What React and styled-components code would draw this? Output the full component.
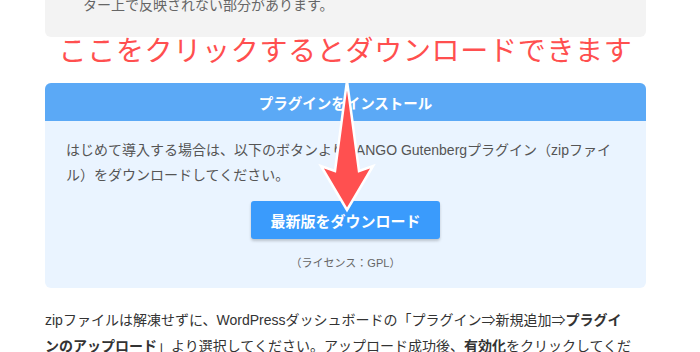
import React from 'react';
import styled, { createGlobalStyle } from 'styled-components';

const GlobalStyle = createGlobalStyle`
  body {
    margin: 0;
    background: #fff;
    font-family: "Liberation Sans", "Noto Sans CJK JP", sans-serif;
  }
`;

const Page = styled.div`
  position: relative;
  width: 700px;
  height: 352px;
  overflow: hidden;
  padding: 0 54px 0 45px;
  box-sizing: border-box;
`;

const Note = styled.div`
  margin-top: -20px;
  padding: 12px 38px 19px;
  background: #f3f3f3;
  border-radius: 6px;
  font-size: 14px;
  line-height: 26px;
  color: #666;
`;

const Annotation = styled.div`
  height: 46px;
  line-height: 24px;
  text-align: center;
  font-family: "Noto Sans CJK JP", sans-serif;
  font-weight: 400;
  font-size: 28px;
  letter-spacing: 0.7px;
  color: #ff4f4f;
  text-shadow: 0 0 2px #fff, 0 0 2px #fff;
`;

const InstallBox = styled.section`
  background: #eaf4ff;
  border-radius: 6px;
  overflow: hidden;
`;

const BoxHeader = styled.div`
  height: 38px;
  display: flex;
  align-items: center;
  justify-content: center;
  background: #5ba9f6;
  color: #fff;
  font-weight: bold;
  font-size: 14.5px;
`;

const BoxBody = styled.div`
  display: flex;
  flex-direction: column;
  align-items: center;
  padding: 17px 21px 17px;
`;

const BoxText = styled.p`
  margin: 0;
  align-self: stretch;
  font-size: 14px;
  line-height: 25px;
  color: #555;
`;

const DownloadButton = styled.a`
  margin-top: 13px;
  width: 189px;
  height: 38px;
  display: flex;
  align-items: center;
  justify-content: center;
  background: #3a9bfc;
  border-radius: 3px;
  box-shadow: 0 2px 3px rgba(0, 0, 0, 0.2);
  color: #fff;
  font-weight: bold;
  font-size: 15px;
  text-decoration: none;
`;

const License = styled.div`
  margin-top: 16px;
  font-size: 11px;
  line-height: 16px;
  color: #666;
`;

const Paragraph = styled.p`
  margin: 19px 0 0;
  width: 588px;
  font-size: 14px;
  line-height: 26px;
  color: #333;

  b {
    font-weight: bold;
  }
`;

const ArrowLayer = styled.svg`
  position: absolute;
  left: 0;
  top: 0;
  pointer-events: none;
`;

const Arrow = () => (
  <ArrowLayer width="700" height="352" viewBox="0 0 700 352">
    <polygon
      points="347,81 359,171 373,166 347,210 321,166 335,171"
      fill="#ff5050"
      stroke="#fff"
      strokeWidth="2.5"
      strokeLinejoin="miter"
    />
  </ArrowLayer>
);

export default function App() {
  return (
    <>
      <GlobalStyle />
      <Page>
        <Note>ター上で反映されない部分があります。</Note>
        <Annotation>ここをクリックするとダウンロードできます</Annotation>
        <InstallBox>
          <BoxHeader>プラグインをインストール</BoxHeader>
          <BoxBody>
            <BoxText>
              はじめて導入する場合は、以下のボタンよりDANGO Gutenbergプラグイン（zipファイル）をダウンロードしてください。
            </BoxText>
            <DownloadButton href="#">最新版をダウンロード</DownloadButton>
            <License>（ライセンス：GPL）</License>
          </BoxBody>
        </InstallBox>
        <Paragraph>
          zipファイルは解凍せずに、WordPressダッシュボードの「プラグイン⇒新規追加⇒<b>プラグインのアップロード</b>」より選択してください。アップロード成功後、<b>有効化</b>をクリックしてください。
        </Paragraph>
        <Arrow />
      </Page>
    </>
  );
}
